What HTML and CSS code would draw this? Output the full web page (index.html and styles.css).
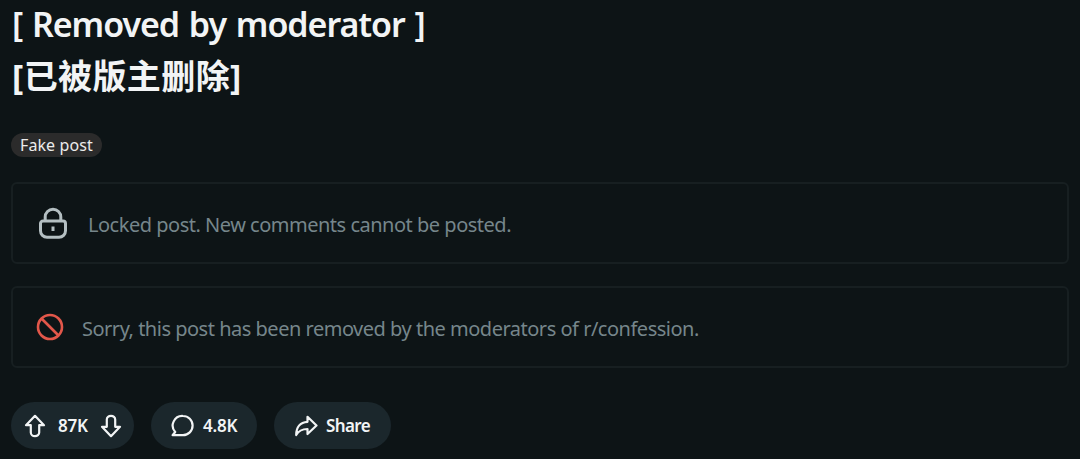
FILE: index.html
```
<!DOCTYPE html>
<html lang="en">
<head>
	<title>Removed by moderator</title>
	<meta charset="utf-8">
	<link rel="stylesheet" href="styles.css">
</head>
<body>
    <div class="post">
        <h1 class="post-title">
            <span class="title-en">[ Removed by moderator ]</span><br>
            <span class="title-zh" lang="zh">[已被版主删除]</span>
        </h1>

        <span class="flair">Fake post</span>

        <div class="notice notice-locked">
            <svg class="icon-lock" width="30" height="33" viewBox="0 0 30 33">
                <path d="M7.2 14V10a7.8 7.8 0 0 1 15.6 0v4"/>
                <path d="M5 14h20a2.5 2.5 0 0 1 2.5 2.5v7.3a6.5 6.5 0 0 1-6.5 6.5H9a6.5 6.5 0 0 1-6.5-6.5v-7.3A2.5 2.5 0 0 1 5 14z"/>
                <path d="M15 19.5v4.5"/>
            </svg>
            <p>Locked post. New comments cannot be posted.</p>
        </div>

        <div class="notice notice-removed">
            <svg class="icon-ban" width="28" height="28" viewBox="0 0 28 28">
                <circle cx="14" cy="14" r="12"/>
                <path d="M5.5 5.5l17 17"/>
            </svg>
            <p>Sorry, this post has been removed by the moderators of r/confession.</p>
        </div>

        <div class="actions">
            <div class="pill pill-vote">
                <svg width="22" height="24" viewBox="0 0 22 24">
                    <path d="M11 1.8L20 11.2H15.2v7.3a4.2 3.7 0 0 1-8.4 0v-7.3H2z"/>
                </svg>
                <span class="votes">87K</span>
                <svg width="22" height="24" viewBox="0 0 22 24">
                    <path d="M11 22.2L20 12.8H15.2V5.5a4.2 3.7 0 0 0-8.4 0v7.3H2z"/>
                </svg>
            </div>
            <div class="pill pill-comments">
                <svg width="24" height="24" viewBox="0 0 24 24">
                    <path d="M13 2a9.6 9.6 0 1 1 0 19.2H2.6l2.6-3.2A9.6 9.6 0 0 1 13 2z"/>
                </svg>
                <span class="comments">4.8K</span>
            </div>
            <div class="pill pill-share">
                <svg width="24" height="24" viewBox="0 0 24 24">
                    <path d="M13.5 2.8L22.5 11.5 13.5 20v-5C8 15 4.5 17 2.2 21 2.2 13.5 6 8.3 13.5 7.8z"/>
                </svg>
                <span class="share">Share</span>
            </div>
        </div>
    </div>
</body>
</html>
```
FILE: styles.css
```
body {
    margin: 0;
    background-color: #0d1416;
    font-family: "Noto Sans", "Noto Sans CJK SC", sans-serif;
    color: #f2f4f5;
}
.post {
    padding: 0 11px;
}
.post-title {
    margin: -2px 0 0 1px;
    font-size: 34px;
    line-height: 52px;
    font-weight: 600;
    white-space: nowrap;
}
.title-en {
    letter-spacing: -1.05px;
    word-spacing: 2px;
}
.title-zh {
    font-weight: 700;
    letter-spacing: 0.4px;
}
.flair {
    display: block;
    width: fit-content;
    margin-top: 31px;
    padding: 1px 9px 0;
    border-radius: 12px;
    background-color: #2b2b2b;
    font-size: 16px;
    line-height: 23px;
    letter-spacing: 0.1px;
    color: #ececec;
}
.notice {
    display: flex;
    align-items: center;
    box-sizing: border-box;
    height: 82px;
    border: 2px solid #171f21;
    border-radius: 6px;
    font-size: 20px;
    letter-spacing: -0.49px;
    color: #76868b;
    white-space: nowrap;
}
.notice p {
    margin: 0;
    padding-top: 2px;
}
.notice svg {
    fill: none;
}
.notice-locked {
    margin-top: 25px;
    padding-left: 25px;
    gap: 20px;
}
.notice-removed {
    margin-top: 22px;
    padding-left: 23px;
    gap: 18px;
}
.icon-lock {
    stroke: #b4bfc2;
    stroke-width: 3;
}
.icon-ban {
    stroke: #e2574a;
    stroke-width: 2.6;
}
.actions {
    display: flex;
    gap: 17px;
    margin-top: 34px;
}
.pill {
    display: flex;
    align-items: center;
    box-sizing: border-box;
    height: 47px;
    border-radius: 24px;
    background-color: #1b272c;
    font-size: 17px;
    font-weight: 600;
    letter-spacing: -0.2px;
}
.pill svg {
    fill: none;
    stroke: #f2f4f5;
    stroke-width: 2.2;
    stroke-linejoin: round;
}
.pill-vote {
    width: 123px;
    padding: 0 12px 0 13px;
    justify-content: space-between;
}
.pill-comments {
    width: 106px;
    padding-left: 19px;
    gap: 9px;
}
.pill-share {
    width: 117px;
    padding-left: 20px;
    gap: 8px;
}
.share {
    letter-spacing: -0.6px;
}
```
